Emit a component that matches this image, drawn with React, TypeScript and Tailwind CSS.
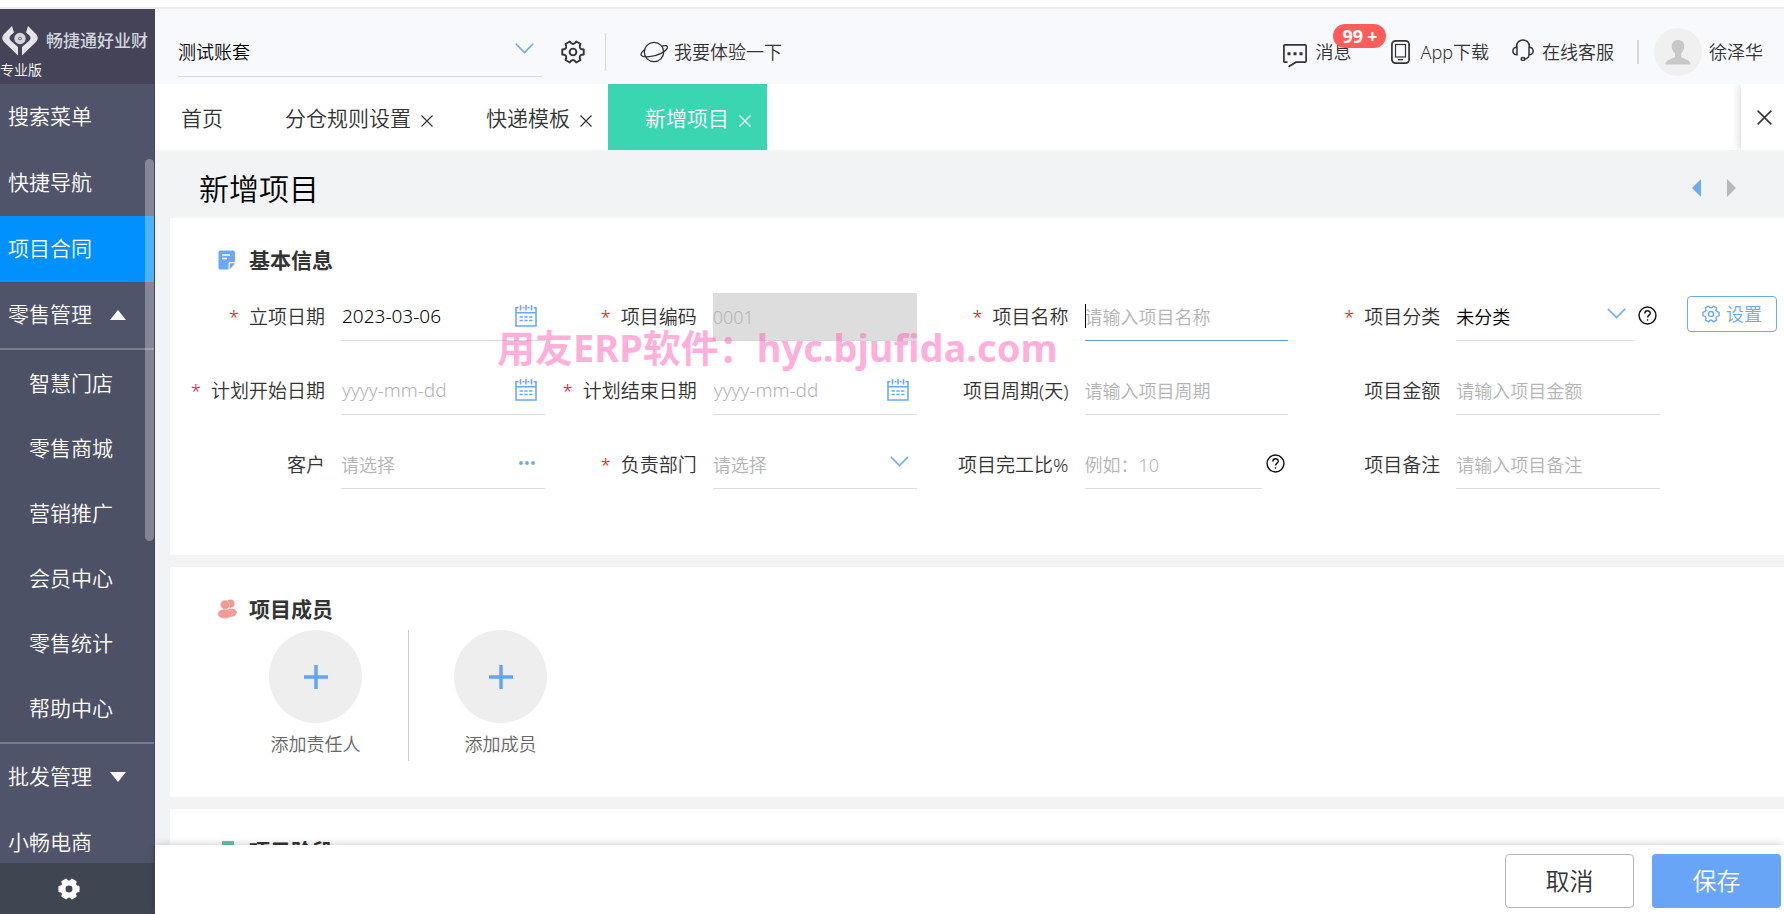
import { useState } from "react";
import type { ReactNode } from "react";

const fontStack = "font-['Noto_Sans','Noto_Sans_CJK_SC',sans-serif]";

// six rounded teeth around a 24x24 box, first tooth pointing right
const gearPath = (outer: number, control: number) => {
    const point = (r: number, deg: number) => {
        const rad = (deg * Math.PI) / 180;
        return (12 + r * Math.cos(rad)).toFixed(2) + " " + (12 + r * Math.sin(rad)).toFixed(2);
    };
    let d = "M" + point(outer, -13);
    for (let a = 0; a < 360; a += 60) {
        d += "L" + point(outer, a + 13) + "Q" + point(control, a + 30) + " " + point(outer, a + 47);
    }
    return d + "Z";
};

function Gear({ className, hole = 3.4 }: { className: string; hole?: number }) {
    return (
        <svg viewBox="0 0 24 24" className={className} fill="none" stroke="currentColor" strokeWidth="1.9" strokeLinejoin="round">
            <path d={gearPath(11, 5.6)} />
            <circle cx="12" cy="12" r={hole} />
        </svg>
    );
}

function Chevron() {
    return (
        <svg viewBox="0 0 19 11" className="h-[11px] w-[19px]" fill="none" stroke="#6fabf9" strokeWidth="1.6">
            <path d="M.8.8 9.5 9.6 18.2.8" />
        </svg>
    );
}

function Cross({ className }: { className: string }) {
    return (
        <svg viewBox="0 0 12 12" className={className} fill="none" stroke="currentColor" strokeWidth="1.2">
            <path d="M.5.5l11 11M11.5.5l-11 11" />
        </svg>
    );
}

function Calendar() {
    return (
        <svg viewBox="0 0 22 22" className="h-[22px] w-[22px]" fill="none" stroke="#6ba8f8" strokeWidth="1.6">
            <path d="M3.5 2.8H1v18.2h20V2.8h-2.5M7.5 2.8h2M12.5 2.8h2M1 7.7h20M5.5 0v5.5M11 0v5.5M16.5 0v5.5" />
            <path d="M4.5 12h3.4M9.3 12h3.4M14.1 12h3.4M4.5 15.5h3.4M9.3 15.5h3.4M14.1 15.5h3.4" />
        </svg>
    );
}

function Help() {
    return (
        <svg viewBox="0 0 20 20" className="h-[19px] w-[19px]" fill="none" stroke="#111" strokeWidth="1.5">
            <circle cx="10" cy="10" r="8.9" />
            <path d="M7.2 7.8c0-3.8 5.7-3.6 5.7-.3 0 2-2.8 2.2-2.8 4.6" />
            <circle cx="10.1" cy="14.7" r=".5" fill="#111" strokeWidth=".8" />
        </svg>
    );
}

const topMenu = ["搜索菜单", "快捷导航", "项目合同"];
const subMenu = ["智慧门店", "零售商城", "营销推广", "会员中心", "零售统计", "帮助中心"];

function Sidebar() {
    const [active, setActive] = useState("项目合同");
    const item = "flex h-[66px] w-full shrink-0 items-center pl-2 text-left ";
    return (
        <aside className="relative flex w-[155px] shrink-0 flex-col border-r border-[#454559] bg-[#50546a] text-[21px] text-white">
            <div className="flex h-[75px] shrink-0 flex-col justify-end gap-1 bg-[#444357] pb-1">
                <div className="flex items-center gap-2 pl-[2px]">
                    <svg viewBox="0 0 36 30" className="h-[30px] w-9 shrink-0" fill="#e6e6ea">
                        <path d="M10 0 1.5 8.5Q-1 12 1.5 15.5L16 29.5V21L8.5 14.5Q6.5 12 8.5 9.5L12 6.5Z" />
                        <path d="M26 0 34.5 8.5Q37 12 34.5 15.5L20 29.5V21L27.5 14.5Q29.5 12 27.5 9.5L24 6.5Z" />
                        <circle cx="18" cy="12.5" r="3.7" fill="none" stroke="#d5d5db" strokeWidth="4" />
                        <circle cx="18" cy="12.5" r="1" />
                    </svg>
                    <span className="whitespace-nowrap text-[17px] font-medium leading-6 text-gray-300">畅捷通好业财</span>
                </div>
                <span className="text-sm leading-5">专业版</span>
            </div>
            <nav className="flex min-h-0 flex-1 flex-col overflow-hidden">
                {topMenu.map((name) =>
                    <button key={name} onClick={() => setActive(name)} className={item + (active == name ? "bg-[#0091ff]" : "")}>{name}</button>
                )}
                <button className={item + "gap-[18px]"}>
                    零售管理
                    <svg viewBox="0 0 16 10" className="h-[10px] w-4" fill="#fff"><path d="M8 0l8 10H0z" /></svg>
                </button>
                <div className="border-y-2 border-white/25 bg-[#4d5166] py-px">
                    {subMenu.map((name) =>
                        <button key={name} className="flex h-[65px] w-full items-center pl-[29px]">{name}</button>
                    )}
                </div>
                <button className={item + "gap-[18px]"}>
                    批发管理
                    <svg viewBox="0 0 16 10" className="h-[10px] w-4" fill="#fff"><path d="M8 10l8-10H0z" /></svg>
                </button>
                <button className={item}>小畅电商</button>
            </nav>
            <div className="absolute right-0 top-[150px] h-[382px] w-[9px] rounded-full bg-white/30" />
            <button aria-label="系统设置" className="flex h-[51px] shrink-0 items-center bg-[#404552] pl-[58px]">
                <svg viewBox="0 0 24 24" className="h-[22px] w-[22px]">
                    <path d={gearPath(10.8, 6)} fill="#fff" stroke="#fff" strokeWidth="2" strokeLinejoin="round" />
                    <circle cx="12" cy="12" r="3.8" fill="#404552" />
                </svg>
            </button>
        </aside>
    );
}

function Header() {
    return (
        <header className="flex h-[75px] shrink-0 items-center bg-[#f8f9fd] pl-[23px] pr-[21px] pt-[11px] text-lg text-[#333]">
            <div className="relative mb-[7px] flex w-[364px] items-center self-stretch border-b border-[#dcdcdf]">
                <select aria-label="账套" className="w-full appearance-none bg-transparent pt-[8px] text-black outline-none">
                    <option>测试账套</option>
                </select>
                <span className="pointer-events-none absolute right-2"><Chevron /></span>
            </div>
            <button aria-label="账套设置" className="ml-[19px]"><Gear className="h-6 w-6" /></button>
            <div className="ml-5 h-[38px] w-px bg-[#d8d8dc]" />
            <button className="ml-[34px] flex items-center gap-[6px]">
                <svg viewBox="0 0 28 22" className="h-[22px] w-7" fill="none" stroke="#333" strokeWidth="1.3">
                    <circle cx="14" cy="11" r="9.7" />
                    <path d="M4.8 8.5C-1.5 13.5.2 16.5 9.5 15.7c8-.8 17-5.2 17.9-9C27.7 4.5 25.5 4 22 5.2" />
                </svg>
                <span>我要体验一下</span>
            </button>
            <div className="ml-auto flex items-center">
                <button className="relative flex items-center gap-2">
                    <svg viewBox="0 0 24 24" className="mt-2 h-6 w-6" fill="none" stroke="#333" strokeWidth="1.7">
                        <path d="M4.5 18.2H1.5Q.9 18.2.9 17.5V2Q.9.9 2 .9H22Q23.1.9 23.1 2V17Q23.1 18.2 22 18.2H13L5.5 22.8" />
                        <path d="M4.5 9.7h3M10.5 9.7h3M16.5 9.7h3" strokeWidth="3" />
                    </svg>
                    消息
                    <span className="absolute -top-3 left-[50px] flex h-6 w-[53px] items-center justify-center gap-1 rounded-full bg-[#ff5c5c] text-lg font-bold leading-6 text-white">
                        99<span>+</span>
                    </span>
                </button>
                <button className="ml-10 flex items-center gap-[10px]">
                    <svg viewBox="0 0 19 24" className="h-6 w-[19px]" fill="none" stroke="#333">
                        <rect x=".9" y=".9" width="17.2" height="22.2" rx="3.5" strokeWidth="1.7" />
                        <rect x="4.5" y="4.5" width="10" height="12.5" strokeWidth="1.2" />
                        <path d="M7 19.7h5" strokeWidth="1.3" />
                    </svg>
                    App下载
                </button>
                <button className="ml-[23px] flex items-center gap-2">
                    <svg viewBox="0 0 22 22" className="mb-1 h-[22px] w-[22px]" fill="none" stroke="#333" strokeWidth="1.5">
                        <path d="M4.5 8C4.5-1.5 17.5-1.5 17.5 8M5 8.2v7.6C-.5 16-.5 8 5 8.2zM17 8.2v7.6c5.5.2 5.5-7.8 0-7.6zM17 15.8q-.3 4-4.3 4.2" />
                        <ellipse cx="11" cy="20" rx="1.9" ry="1.4" />
                    </svg>
                    在线客服
                </button>
                <div className="ml-[23px] h-6 w-[2px] bg-[#d8d8dc]" />
                <button className="ml-[15px] flex items-center gap-[7px]">
                    <svg viewBox="0 0 48 48" className="h-12 w-12">
                        <circle cx="24" cy="24" r="24" fill="#f0f0f0" />
                        <path d="M24 12c8 0 7.5 10 3.2 13.2V29c3 2 9.3 2.5 9.3 7.5h-25C11.5 31.5 18 31 21 29v-3.8C16.5 22 16 12 24 12z" fill="#c8c8c8" />
                    </svg>
                    徐泽华
                </button>
            </div>
        </header>
    );
}

function Tabs() {
    const [tabs, setTabs] = useState(["分仓规则设置", "快递模板", "新增项目"]);
    return (
        <div className="flex h-[66px] shrink-0 items-stretch overflow-hidden bg-white text-[21px] text-[#333]">
            <button className="pl-[26px] pr-[25px] pt-1">首页</button>
            {tabs.map((tab) =>
                <div key={tab} className={"flex items-center gap-[10px] pl-[37px] pr-4 pt-1 " + (tab == "新增项目" ? "bg-[#3ad6b2] text-white" : "")}>
                    <button>{tab}</button>
                    <button aria-label={"关闭" + tab} onClick={() => setTabs(tabs.filter((t) => t != tab))}><Cross className="mt-1 h-3 w-3" /></button>
                </div>
            )}
            <button aria-label="关闭全部" className="ml-auto flex w-[43px] items-center justify-center pl-[3px] shadow-[0_0_10px_rgba(0,0,0,0.2)]">
                <Cross className="h-[15px] w-[15px]" />
            </button>
        </div>
    );
}

type Item = {
    id: string;
    label: string;
    required?: boolean;
    value?: string;
    placeholder?: string;
    kind?: "date" | "select" | "lookup";
    disabled?: boolean;
    active?: boolean;
    help?: boolean;
};

const fields: Item[] = [
    { id: "setupDate", label: "立项日期", required: true, value: "2023-03-06", kind: "date" },
    { id: "code", label: "项目编码", required: true, value: "0001", disabled: true },
    { id: "name", label: "项目名称", required: true, placeholder: "请输入项目名称", active: true },
    { id: "category", label: "项目分类", required: true, value: "未分类", kind: "select", help: true },
    { id: "startDate", label: "计划开始日期", required: true, placeholder: "yyyy-mm-dd", kind: "date" },
    { id: "endDate", label: "计划结束日期", required: true, placeholder: "yyyy-mm-dd", kind: "date" },
    { id: "period", label: "项目周期(天)", placeholder: "请输入项目周期" },
    { id: "amount", label: "项目金额", placeholder: "请输入项目金额" },
    { id: "customer", label: "客户", placeholder: "请选择", kind: "lookup" },
    { id: "department", label: "负责部门", required: true, placeholder: "请选择", kind: "select" },
    { id: "progress", label: "项目完工比%", placeholder: "例如：10", help: true },
    { id: "remark", label: "项目备注", placeholder: "请输入项目备注" },
];

function Field({ item }: { item: Item }) {
    const box = "relative flex h-12 min-w-0 flex-1 items-center border-b text-lg " +
        (item.disabled ? "border-[#d8d8d8] bg-[#ddd]" : item.active ? "border-[#5b9ff8]" : "border-[#dcdcdc]");
    return (
        <div className="flex items-center">
            <label htmlFor={item.id} className="w-[152px] shrink-0 whitespace-nowrap text-right text-[19px] text-[#333]">
                {item.required && <span className="mr-[10px] text-lg text-[#f00]">*</span>}
                {item.label}
            </label>
            <div className={"ml-4 " + box}>
                {item.kind == "select" ?
                    <select id={item.id} className={"w-full appearance-none bg-transparent outline-none " + (item.value ? "text-black" : "text-[#b4b4b4]")}>
                        <option>{item.value || item.placeholder}</option>
                    </select>
                    :
                    <input id={item.id} type="text" defaultValue={item.value} placeholder={item.placeholder} disabled={item.disabled}
                        className={"w-full min-w-0 bg-transparent text-black outline-none placeholder:text-[#b4b4b4] disabled:text-[#b4b4b4] " + (item.kind == "date" ? "pl-px text-[19px]" : "")} />
                }
                {item.active && <span className="absolute left-0 top-[11px] h-6 w-px bg-black" />}
                {item.kind == "date" && <span className="absolute right-2 top-[12px]"><Calendar /></span>}
                {item.kind == "select" && <span className="pointer-events-none absolute right-2 top-[15px]"><Chevron /></span>}
                {item.kind == "lookup" &&
                    <button aria-label="选择客户" className="absolute right-[10px] top-5">
                        <svg viewBox="0 0 16 4" className="h-1 w-4" fill="#6ba8f8">
                            <circle cx="2" cy="2" r="1.9" /><circle cx="8" cy="2" r="1.9" /><circle cx="14" cy="2" r="1.9" />
                        </svg>
                    </button>
                }
            </div>
            {item.help && <span className="ml-1 mr-[3px] pb-[3px]"><Help /></span>}
        </div>
    );
}

function SectionTitle({ icon, children }: { icon: ReactNode; children: ReactNode }) {
    return (
        <h2 className="flex items-center gap-3 pl-[47px] text-[21px] font-bold leading-[30px] text-[#333]">
            {icon}
            {children}
        </h2>
    );
}

function AddMember({ label }: { label: string }) {
    return (
        <button className="flex w-[93px] flex-col items-center gap-2 whitespace-nowrap text-lg leading-[26px] text-[#666]">
            <span className="flex h-[93px] w-[93px] items-center justify-center rounded-full bg-[#eee]">
                <svg viewBox="0 0 24 24" className="h-6 w-6" stroke="#64a4f7" strokeWidth="3.5"><path d="M12 0v24M0 12h24" /></svg>
            </span>
            {label}
        </button>
    );
}

export default function App() {
    return (
        <div className={"flex h-screen flex-col overflow-hidden bg-white font-[350] " + fontStack}>
            <div className="h-[9px] shrink-0 border-b-2 border-[#eee]" />
            <div className="flex min-h-0 flex-1">
                <Sidebar />
                <div className="flex min-w-0 flex-1 flex-col">
                    <Header />
                    <Tabs />
                    <main className="min-h-0 flex-1 overflow-hidden bg-[#f2f3f5] pl-[15px]">
                        <div className="flex h-[68px] items-center pl-[29px] pr-12 pt-2">
                            <h1 className="text-[30px] text-black">新增项目</h1>
                            <div className="ml-auto flex items-center gap-[26px]">
                                <button aria-label="上一张"><svg viewBox="0 0 9 18" className="h-[18px] w-[9px]" fill="#6fa8f5"><path d="M9 0v18L0 9z" /></svg></button>
                                <button aria-label="下一张"><svg viewBox="0 0 9 18" className="h-[18px] w-[9px]" fill="#b8b8b8"><path d="M0 0v18l9-9z" /></svg></button>
                            </div>
                        </div>
                        <section className="relative bg-white pb-[66px] pt-[27px]">
                            <SectionTitle icon={
                                <svg viewBox="0 0 20 20" className="h-5 w-5">
                                    <path d="M3 .5h13a2 2 0 0 1 2 2V12h-5a1.5 1.5 0 0 0-1.5 1.5v6H3a1.5 1.5 0 0 1-1.5-1.5V2A1.5 1.5 0 0 1 3 .5zM12.7 19.3v-6h5.6z" fill="#6ba8f8" />
                                    <path d="M5 5h8M5 8.5h5" stroke="#fff" strokeWidth="1.5" />
                                </svg>
                            }>基本信息</SectionTitle>
                            <div className="mt-[18px] flex items-start">
                                <div className="grid min-w-0 flex-1 grid-cols-4 gap-y-[26px] pl-[3px]">
                                    {fields.map((item) => <Field key={item.id} item={item} />)}
                                </div>
                                <button className="ml-[27px] mr-[7px] mt-[3px] flex h-9 w-[90px] shrink-0 items-center justify-center gap-[6px] rounded border border-[#6ba8f8] text-lg text-[#6ba8f8]">
                                    <Gear className="h-[18px] w-[18px]" />设置
                                </button>
                            </div>
                            <p className="pointer-events-none absolute left-[327px] top-[104px] whitespace-nowrap text-[38px] font-bold leading-[50px] text-[#ff5fb5]/50">用友ERP软件：hyc.bjufida.com</p>
                        </section>
                        <section className="mt-3 bg-white pb-9 pt-[27px]">
                            <SectionTitle icon={
                                <svg viewBox="0 0 20 20" className="h-5 w-5" fill="#f29a94">
                                    <circle cx="13.5" cy="4.6" r="4.1" />
                                    <ellipse cx="14.2" cy="13.6" rx="5.6" ry="4.2" />
                                    <g stroke="#f9cdca" strokeWidth=".6">
                                        <circle cx="8" cy="5.8" r="4.5" />
                                        <path d="M8 10.3c9 0 10 8.9 0 8.9s-9-8.9 0-8.9z" />
                                    </g>
                                </svg>
                            }>项目成员</SectionTitle>
                            <div className="mt-[6px] flex pl-[99px]">
                                <AddMember label="添加责任人" />
                                <div className="ml-[46px] mr-[45px] h-[131px] w-px bg-[#ccc]" />
                                <AddMember label="添加成员" />
                            </div>
                        </section>
                        <section className="mt-3 bg-white pb-9 pt-[27px]">
                            <SectionTitle icon={
                                <svg viewBox="0 0 20 20" className="h-5 w-5" fill="#5fc8a6"><path d="M5 0h12v4H5zM2 6h16v13H2z" /></svg>
                            }>项目阶段</SectionTitle>
                        </section>
                    </main>
                    <footer className="relative flex h-[69px] shrink-0 items-center justify-end gap-[18px] bg-white pr-[3px] pt-[3px] text-2xl shadow-[0_0_8px_rgba(0,0,0,0.22)]">
                        <button className="h-[54px] w-[129px] rounded border border-[#b8b8b8] text-[#333]">取消</button>
                        <button className="h-[54px] w-[129px] rounded bg-[#68a5f6] text-white">保存</button>
                    </footer>
                </div>
            </div>
        </div>
    );
}
